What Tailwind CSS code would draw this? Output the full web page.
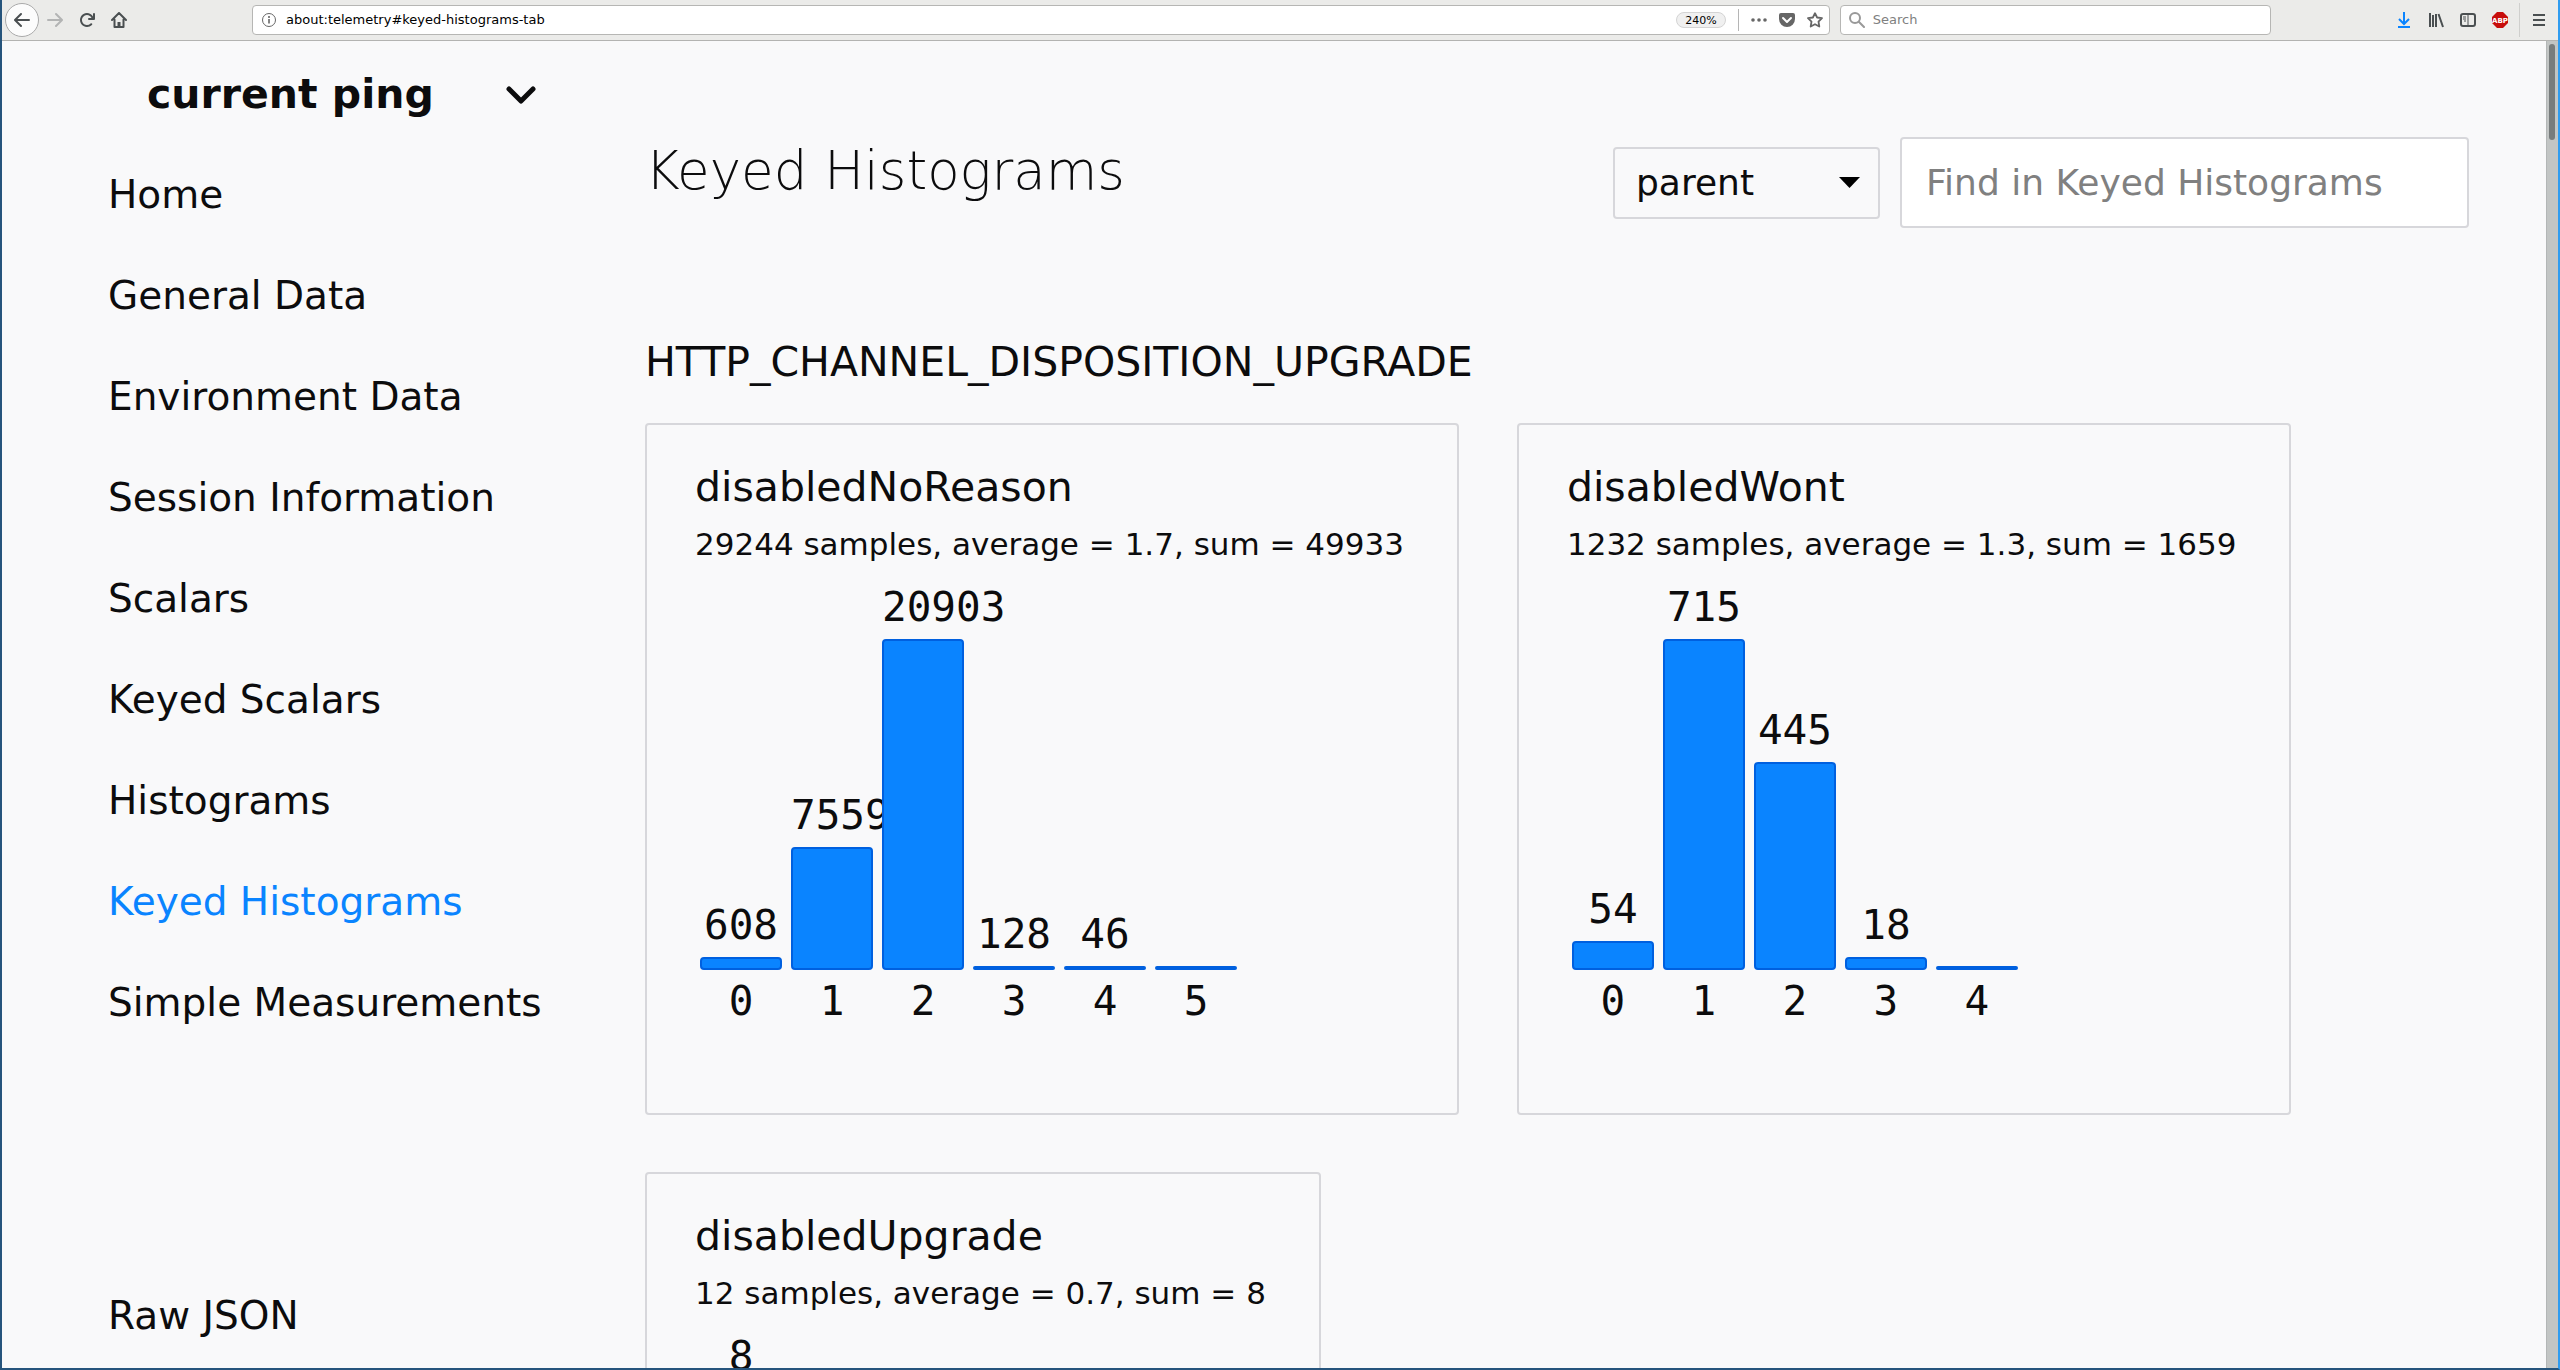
<!DOCTYPE html>
<html lang="en">
<head>
<meta charset="utf-8">
<title>about:telemetry</title>
<script src="https://cdn.jsdelivr.net/npm/@tailwindcss/browser@4"></script>
</head>
<body class="flex h-screen flex-col overflow-hidden border-x-2 border-b-2 border-[#26547c] border-r-[#2f9cf0] bg-[#f9f9fa] font-['DejaVu_Sans',sans-serif] text-[#0c0c0d]">

<!-- Browser toolbar -->
<header class="flex h-[41px] shrink-0 items-center border-b border-[#b3b3b1] bg-[#ebebe9] text-[#4a4f51]">
  <div class="flex items-center gap-4 pl-[3px]">
    <button aria-label="Back" class="flex size-[34px] items-center justify-center rounded-full border border-[#aaa] bg-[#fcfcfc]">
      <svg class="size-4" viewBox="0 0 16 16" fill="currentColor"><path d="M15 7H3.414l4.293-4.293a1 1 0 0 0-1.414-1.414l-6 6a1 1 0 0 0 0 1.414l6 6a1 1 0 0 0 1.414-1.414L3.414 9H15a1 1 0 0 0 0-2z"/></svg>
    </button>
    <button aria-label="Forward" class="-ml-2 text-[#b3b4b4]">
      <svg class="size-4" viewBox="0 0 16 16" fill="currentColor"><path d="M15.707 7.293l-6-6a1 1 0 0 0-1.414 1.414L12.586 7H1a1 1 0 0 0 0 2h11.586l-4.293 4.293a1 1 0 1 0 1.414 1.414l6-6a1 1 0 0 0 0-1.414z"/></svg>
    </button>
    <button aria-label="Reload">
      <svg class="size-4" viewBox="0 0 16 16" fill="currentColor"><path d="M15 1a1 1 0 0 0-1 1v2.418A6.995 6.995 0 1 0 8 15a6.954 6.954 0 0 0 4.95-2.05 1 1 0 0 0-1.414-1.414A5.019 5.019 0 1 1 12.549 6H10a1 1 0 0 0 0 2h5a1 1 0 0 0 1-1V2a1 1 0 0 0-1-1z"/></svg>
    </button>
    <button aria-label="Home">
      <svg class="size-4" viewBox="0 0 16 16" fill="none" stroke="currentColor" stroke-width="2" stroke-linejoin="round" stroke-linecap="round"><path d="M1 8l7-7 7 7M3.500 7.500V15h9V7.500"/><path d="M8 15v-5" stroke-width="3" stroke-linecap="butt"/></svg>
    </button>
  </div>
  <div class="ml-[125px] flex h-[30px] flex-[1583] items-center rounded border border-[#b6b6b4] bg-white pr-1.5 pl-2 text-[#666]">
    <svg class="size-4 shrink-0" viewBox="0 0 16 16" fill="none" stroke="currentColor"><circle cx="8" cy="8" r="6.500"/><path d="M8 7v4.500M8 4v2" stroke-width="1.600"/></svg>
    <input aria-label="Address" value="about:telemetry#keyed-histograms-tab" class="ml-[9px] min-w-0 flex-1 text-[13px] text-black outline-none">
    <button class="h-4 rounded-full border border-[#d4d4d4] bg-[#f0f0f0] px-2 text-[11px] leading-[13px] text-black">240%</button>
    <span class="ml-3 h-[22px] w-px bg-[#b5b5b5]"></span>
    <div class="ml-3 flex items-center gap-3">
      <button aria-label="Page actions"><svg class="size-4" viewBox="0 0 16 16" fill="currentColor"><circle cx="2" cy="8" r="1.800"/><circle cx="8" cy="8" r="1.800"/><circle cx="14" cy="8" r="1.800"/></svg></button>
      <button aria-label="Save to Pocket"><svg class="size-4" viewBox="0 0 16 16" fill="currentColor"><path d="M8 15a8 8 0 0 1-8-8V3a2 2 0 0 1 2-2h12a2 2 0 0 1 2 2v4a8 8 0 0 1-8 8zm3.985-10.032a.99.99 0 0 0-.725.319L7.978 8.570 4.755 5.336A.984.984 0 0 0 4 4.968a1 1 0 0 0-.714 1.700l-.016.011 3.293 3.306.707.707a1 1 0 0 0 1.414 0l.707-.707L12.700 6.679a1 1 0 0 0-.715-1.711z"/></svg></button>
      <button aria-label="Bookmark"><svg class="size-4" viewBox="0 0 16 16" fill="none" stroke="currentColor" stroke-width="1.800" stroke-linejoin="round"><path d="M8 1.200l2.100 4.300 4.900.7-3.500 3.400.8 4.900L8 12.200l-4.300 2.300.8-4.900L1 6.200l4.900-.7z"/></svg></button>
    </div>
  </div>
  <div class="ml-2.5 flex h-[30px] flex-[427] items-center rounded border border-[#b6b6b4] bg-white pl-2 text-[#999]">
    <svg class="size-4 shrink-0" viewBox="0 0 16 16" fill="none" stroke="currentColor" stroke-width="2"><circle cx="6" cy="6" r="5"/><path d="M9.800 9.800L15 15" stroke-linecap="round"/></svg>
    <input aria-label="Search" placeholder="Search" class="ml-2 min-w-0 flex-1 text-[13px] outline-none placeholder:text-[#808080]">
  </div>
  <div class="ml-[125px] flex items-center gap-4">
    <button aria-label="Downloads" class="text-[#0a84ff]"><svg class="size-4" viewBox="0 0 16 16" fill="none" stroke="currentColor" stroke-width="2"><path d="M8 0v12M3 7l5 5 5-5M2 15h12"/></svg></button>
    <button aria-label="Library"><svg class="size-4" viewBox="0 0 16 16" fill="none" stroke="currentColor" stroke-width="2"><path d="M2 1v14M5 3v12M8 2v13M10.500 2l4.500 13"/></svg></button>
    <button aria-label="Sidebars"><svg class="size-4" viewBox="0 0 16 16" fill="none" stroke="currentColor"><rect x="1" y="2" width="14" height="12" rx="2" stroke-width="2"/><path d="M8 2v12M3 5h3M3 7h3M4 9h2"/></svg></button>
    <button aria-label="Adblock Plus"><svg class="size-4" viewBox="0 0 16 16"><path d="M5 0h6l5 5v6l-5 5H5l-5-5V5z" fill="#c70d0b"/><text x="8" y="10.500" text-anchor="middle" fill="#fff" font-size="7" font-weight="bold">ABP</text></svg></button>
  </div>
  <span class="mx-[11px] h-[34px] w-px bg-[#cfcfcd]"></span>
  <button aria-label="Menu" class="mr-[11px]"><svg class="size-4" viewBox="0 0 16 16" fill="none" stroke="currentColor" stroke-width="2"><path d="M2 3h12M2 8h12M2 13h12"/></svg></button>
</header>

<div class="flex min-h-0 flex-1">
  <!-- Categories -->
  <nav class="flex w-[643px] shrink-0 flex-col pt-[29px] pb-0.5 pl-[106px] text-[39px] leading-[101px]">
    <button class="flex items-center pl-[39px] text-[41px] leading-[48px] font-bold">current ping
      <svg class="ml-[69px] size-9" viewBox="0 0 36 36" fill="none" stroke="currentColor" stroke-width="5" stroke-linecap="round" stroke-linejoin="round"><path d="M6 13l12 12 12-12"/></svg>
    </button>
    <ul class="mt-[26px]">
      <li><a href="#home">Home</a></li>
      <li><a href="#general">General Data</a></li>
      <li><a href="#environment">Environment Data</a></li>
      <li><a href="#session">Session Information</a></li>
      <li><a href="#scalars">Scalars</a></li>
      <li><a href="#keyed-scalars">Keyed Scalars</a></li>
      <li><a href="#histograms">Histograms</a></li>
      <li><a href="#keyed-histograms" class="text-[#0a84ff]">Keyed Histograms</a></li>
      <li><a href="#simple">Simple Measurements</a></li>
    </ul>
    <a href="#raw" class="mt-auto">Raw JSON</a>
  </nav>

  <main class="min-w-0 flex-1 overflow-hidden pt-24 pr-[77px]">
    <div class="flex items-start justify-between">
      <h1 class="text-[53px] leading-[68px] font-extralight">Keyed Histograms</h1>
      <div class="flex items-center gap-5">
        <div class="relative">
          <select aria-label="Process" class="h-[72px] w-[267px] appearance-none rounded border-2 border-[#d7d7db] bg-transparent pl-[21px] text-[36px]"><option>parent</option></select>
          <svg class="pointer-events-none absolute top-[30px] right-5 h-[11px] w-[21px]" viewBox="0 0 21 11"><path d="M0 0h21L10.500 11z"/></svg>
        </div>
        <input aria-label="Find" placeholder="Find in Keyed Histograms" class="h-[91px] w-[569px] rounded border-2 border-[#d7d7db] bg-white px-6 text-[36px] outline-none placeholder:text-[#808080]">
      </div>
    </div>

    <h2 class="mt-[110px] text-[41px] leading-[48px]">HTTP_CHANNEL_DISPOSITION_UPGRADE</h2>
    <div class="mt-[37px] flex flex-wrap gap-x-[58px] gap-y-[57px]">
      <section class="rounded border-2 border-[#d7d7db] pt-[38px] pr-[53px] pb-[88px] pl-12">
        <h3 class="text-[41px] leading-[48px]">disabledNoReason</h3>
        <p class="mt-[15px] text-[31px] leading-9">29244 samples, average = 1.7, sum = 49933</p>
        <div class="mt-5 flex h-[443px] items-end gap-[9px] pl-[5px] text-center font-['DejaVu_Sans_Mono',monospace] text-[41px] leading-[48px]">
          <div class="relative w-[82px]">608<div class="mt-2 mb-[7px] rounded border-2 border-[#0060df] bg-[#0a84ff]" style="height:13px"></div>0</div>
          <div class="relative w-[82px]">7559<div class="mt-2 mb-[7px] rounded border-2 border-[#0060df] bg-[#0a84ff]" style="height:123px"></div>1</div>
          <div class="relative w-[82px]">20903<div class="mt-2 mb-[7px] rounded border-2 border-[#0060df] bg-[#0a84ff]" style="height:331px"></div>2</div>
          <div class="relative w-[82px]">128<div class="mt-2 mb-[7px] rounded border-2 border-[#0060df] bg-[#0a84ff]" style="height:4px"></div>3</div>
          <div class="relative w-[82px]">46<div class="mt-2 mb-[7px] rounded border-2 border-[#0060df] bg-[#0a84ff]" style="height:4px"></div>4</div>
          <div class="relative w-[82px]"><div class="mt-2 mb-[7px] rounded border-2 border-[#0060df] bg-[#0a84ff]" style="height:4px"></div>5</div>
        </div>
      </section>
      <section class="rounded border-2 border-[#d7d7db] pt-[38px] pr-[53px] pb-[88px] pl-12">
        <h3 class="text-[41px] leading-[48px]">disabledWont</h3>
        <p class="mt-[15px] text-[31px] leading-9">1232 samples, average = 1.3, sum = 1659</p>
        <div class="mt-5 flex h-[443px] items-end gap-[9px] pl-[5px] text-center font-['DejaVu_Sans_Mono',monospace] text-[41px] leading-[48px]">
          <div class="relative w-[82px]">54<div class="mt-2 mb-[7px] rounded border-2 border-[#0060df] bg-[#0a84ff]" style="height:29px"></div>0</div>
          <div class="relative w-[82px]">715<div class="mt-2 mb-[7px] rounded border-2 border-[#0060df] bg-[#0a84ff]" style="height:331px"></div>1</div>
          <div class="relative w-[82px]">445<div class="mt-2 mb-[7px] rounded border-2 border-[#0060df] bg-[#0a84ff]" style="height:208px"></div>2</div>
          <div class="relative w-[82px]">18<div class="mt-2 mb-[7px] rounded border-2 border-[#0060df] bg-[#0a84ff]" style="height:13px"></div>3</div>
          <div class="relative w-[82px]"><div class="mt-2 mb-[7px] rounded border-2 border-[#0060df] bg-[#0a84ff]" style="height:4px"></div>4</div>
        </div>
      </section>
      <section class="rounded border-2 border-[#d7d7db] pt-[38px] pr-[53px] pb-[88px] pl-12">
        <h3 class="text-[41px] leading-[48px]">disabledUpgrade</h3>
        <p class="mt-[15px] text-[31px] leading-9">12 samples, average = 0.7, sum = 8</p>
        <div class="mt-5 flex h-[443px] items-end gap-[9px] pl-[5px] text-center font-['DejaVu_Sans_Mono',monospace] text-[41px] leading-[48px]">
          <div class="relative w-[82px]">8<div class="mt-2 mb-[7px] rounded border-2 border-[#0060df] bg-[#0a84ff]" style="height:331px"></div>0</div>
        </div>
      </section>
    </div>
  </main>

  <div class="w-3 shrink-0 border-l border-[#b3b6b6] bg-[#c2c5c4] px-0.5 pt-[3px]"><div class="h-24 w-1.5 rounded-full bg-[#787c7c]"></div></div>
</div>
</body>
</html>
